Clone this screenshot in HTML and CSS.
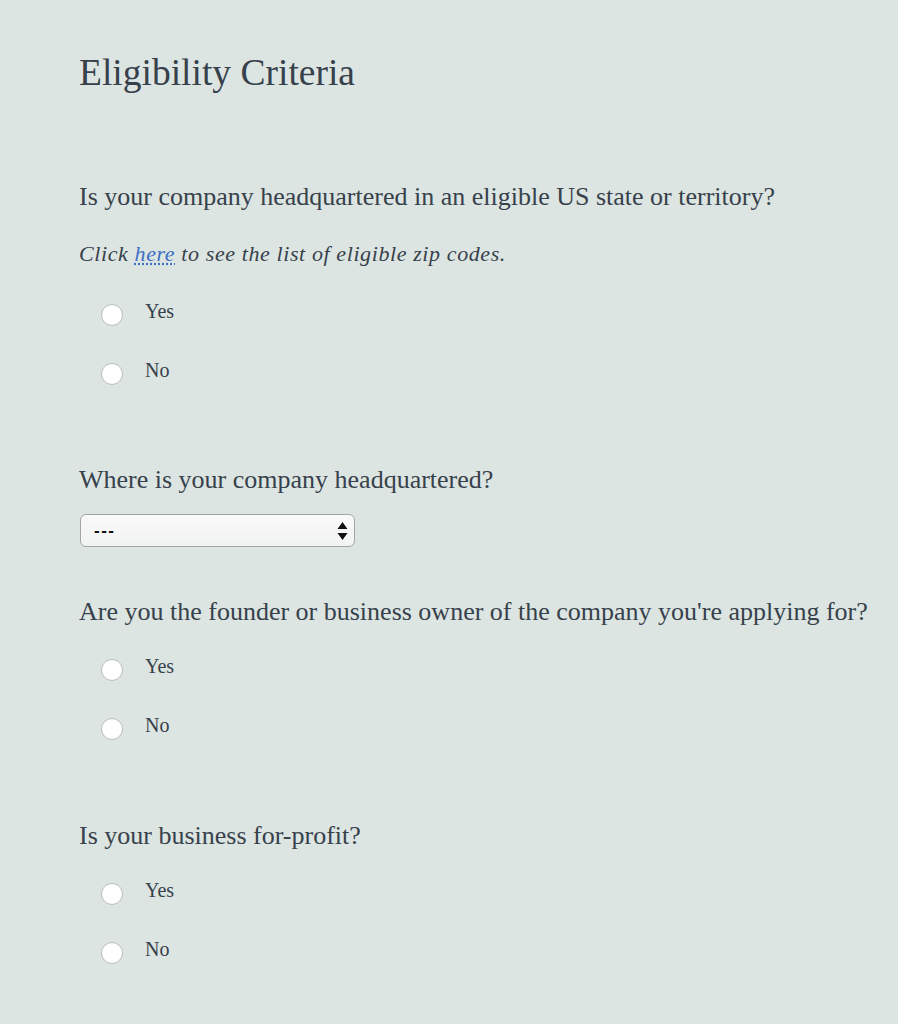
FILE: index.html
```html
<!DOCTYPE HTML>
<html>
<head>
    <title>Eligibility Criteria</title>
    <meta charset="utf-8">
    <link rel="stylesheet" href="styles.css">
</head>
<body>
<div class="form">

    <h1 class="title">Eligibility Criteria</h1>

    <div class="field first">
        <p class="question">Is your company headquartered in an eligible US state or territory?</p>
        <p class="hint">Click <a href="#">here</a> to see the list of eligible zip codes.</p>
        <label class="choice"><span class="radio"></span>Yes</label>
        <label class="choice"><span class="radio"></span>No</label>
    </div>

    <div class="field">
        <p class="question">Where is your company headquartered?</p>
        <div class="select">
            <span class="value">---</span>
            <svg class="arrows" width="11" height="20" viewBox="0 0 11 20"><path d="M5.5 1 L10.5 8 H0.5 Z M0.5 12 H10.5 L5.5 19 Z" fill="#111"/></svg>
        </div>
    </div>

    <div class="field tight">
        <p class="question">Are you the founder or business owner of the company you're applying for?</p>
        <label class="choice"><span class="radio"></span>Yes</label>
        <label class="choice"><span class="radio"></span>No</label>
    </div>

    <div class="field last">
        <p class="question">Is your business for-profit?</p>
        <label class="choice"><span class="radio"></span>Yes</label>
        <label class="choice"><span class="radio"></span>No</label>
    </div>

</div>
</body>
</html>
```

FILE: styles.css
```css
html, body {
    margin: 0;
    background: #dce5e2;
}
body {
    font-family: "Liberation Serif", "Times New Roman", serif;
    color: #37414b;
}
.form {
    padding: 51px 0 0 79px;
}
.title {
    margin: 0;
    font-size: 37.5px;
    font-weight: normal;
    line-height: 44px;
}
.field {
    margin-top: 64px;
}
.field.first {
    margin-top: 86px;
}
.field.tight {
    margin-top: 49px;
}
.field.last {
    margin-top: 65px;
}
.question {
    margin: 0;
    font-size: 26px;
    line-height: 32px;
}
.hint {
    margin: 28px 0 0;
    font-size: 22px;
    font-style: italic;
    line-height: 26px;
    letter-spacing: 0.6px;
}
.hint a {
    color: #3d6fc4;
    text-decoration: underline;
    text-decoration-style: dotted;
}
.choice {
    display: flex;
    align-items: center;
    height: 59px;
    font-size: 20px;
}
.choice .radio {
    width: 22px;
    height: 22px;
    box-sizing: border-box;
    margin: 0 22px 0 22px;
    border: 1px solid #b9bdbc;
    border-radius: 50%;
    background: #fff;
    position: relative;
    top: 3px;
}
.question + .choice {
    margin-top: 9px;
}
.hint + .choice {
    margin-top: 15px;
}
.select {
    display: flex;
    align-items: center;
    justify-content: space-between;
    box-sizing: border-box;
    width: 275px;
    height: 33px;
    margin: 18px 0 0 1px;
    padding: 0 6px 0 13px;
    border: 1px solid #a2a7a5;
    border-radius: 6px;
    background: linear-gradient(#fafafa, #f1f2f2);
    font-family: "Liberation Sans", Arial, sans-serif;
    font-size: 17px;
    font-weight: bold;
    color: #111;
}
.select .value {
    letter-spacing: 1.5px;
}
```
